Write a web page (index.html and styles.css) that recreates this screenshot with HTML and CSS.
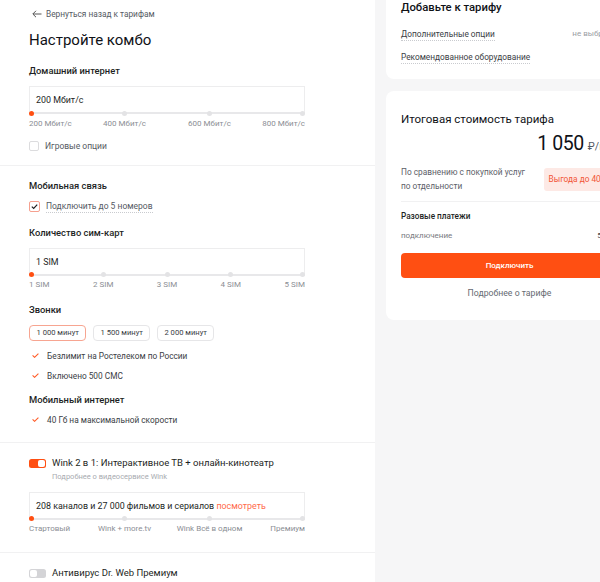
FILE: index.html
```html
<!DOCTYPE html>
<html lang="ru">
<head>
<meta charset="utf-8">
<link rel="stylesheet" href="styles.css">
</head>
<body>
<div class="page">
  <main class="left">
    <section class="sec sec-top">
      <a class="back"><svg class="back-ico" viewBox="0 0 10 8" width="10" height="8"><path d="M9.5 4H1M4 0.8L0.8 4 4 7.2" fill="none" stroke="#555" stroke-width="1"/></svg>Вернуться назад к тарифам</a>
      <h1 class="title">Настройте комбо</h1>
      <h2 class="sub-title">Домашний интернет</h2>
      <div class="slider">
        <div class="slider-box">200 Мбит/с</div>
        <div class="marks">
          <div class="mark first active"><span class="dot"></span><span class="mlabel">200 Мбит/с</span></div>
          <div class="mark"><span class="dot"></span><span class="mlabel">400 Мбит/с</span></div>
          <div class="mark"><span class="dot"></span><span class="mlabel">600 Мбит/с</span></div>
          <div class="mark last"><span class="dot"></span><span class="mlabel">800 Мбит/с</span></div>
        </div>
      </div>
      <label class="check-row game"><span class="box"></span><span class="check-text">Игровые опции</span></label>
    </section>

    <section class="sec sec-mobile">
      <h2 class="sub-title">Мобильная связь</h2>
      <label class="check-row numbers"><span class="box checked"><svg viewBox="0 0 10 10" width="9" height="9"><path d="M2 5.2L4.1 7.2 8 3" fill="none" stroke="#1d1d1f" stroke-width="1.3"/></svg></span><span class="check-text dotted">Подключить до 5 номеров</span></label>
      <h2 class="sub-title sims-title">Количество сим-карт</h2>
      <div class="slider">
        <div class="slider-box">1 SIM</div>
        <div class="marks">
          <div class="mark first active"><span class="dot"></span><span class="mlabel">1 SIM</span></div>
          <div class="mark"><span class="dot"></span><span class="mlabel">2 SIM</span></div>
          <div class="mark"><span class="dot"></span><span class="mlabel">3 SIM</span></div>
          <div class="mark"><span class="dot"></span><span class="mlabel">4 SIM</span></div>
          <div class="mark last"><span class="dot"></span><span class="mlabel">5 SIM</span></div>
        </div>
      </div>
      <h2 class="sub-title calls-title">Звонки</h2>
      <div class="pills">
        <span class="pill active">1 000 минут</span>
        <span class="pill">1 500 минут</span>
        <span class="pill">2 000 минут</span>
      </div>
      <ul class="feats first-feats">
        <li><svg class="tick" viewBox="0 0 7 5" width="7" height="5"><path d="M0.6 2.3L2.6 4.3 6.4 0.6" fill="none" stroke="#ff5a26" stroke-width="1.1"/></svg>Безлимит на Ростелеком по России</li>
        <li><svg class="tick" viewBox="0 0 7 5" width="7" height="5"><path d="M0.6 2.3L2.6 4.3 6.4 0.6" fill="none" stroke="#ff5a26" stroke-width="1.1"/></svg>Включено 500 СМС</li>
      </ul>
      <h2 class="sub-title net-title">Мобильный интернет</h2>
      <ul class="feats">
        <li><svg class="tick" viewBox="0 0 7 5" width="7" height="5"><path d="M0.6 2.3L2.6 4.3 6.4 0.6" fill="none" stroke="#ff5a26" stroke-width="1.1"/></svg>40 Гб на максимальной скорости</li>
      </ul>
    </section>

    <section class="sec sec-tv">
      <div class="toggle-row"><span class="toggle on"><span class="knob"></span></span><span class="toggle-text">Wink 2 в 1: Интерактивное ТВ + онлайн-кинотеатр</span></div>
      <div class="toggle-sub">Подробнее о видеосервисе Wink</div>
      <div class="slider tv-slider">
        <div class="slider-box">208 каналов и 27 000 фильмов и сериалов <span class="link">посмотреть</span></div>
        <div class="marks">
          <div class="mark first active"><span class="dot"></span><span class="mlabel">Стартовый</span></div>
          <div class="mark"><span class="dot"></span><span class="mlabel">Wink + more.tv</span></div>
          <div class="mark"><span class="dot"></span><span class="mlabel">Wink Всё в одном</span></div>
          <div class="mark last"><span class="dot"></span><span class="mlabel">Премиум</span></div>
        </div>
      </div>
    </section>

    <section class="sec sec-av">
      <div class="toggle-row"><span class="toggle"><span class="knob"></span></span><span class="toggle-text">Антивирус Dr. Web Премиум</span></div>
    </section>
  </main>

  <aside class="right">
    <div class="card card-add">
      <h3 class="card-title">Добавьте к тарифу</h3>
      <div class="add-row first-add"><span class="dotted">Дополнительные опции</span><span class="add-val">не выбраны</span></div>
      <div class="add-row"><span class="dotted">Рекомендованное оборудование</span></div>
    </div>
    <div class="card card-total">
      <h3 class="card-title total-title">Итоговая стоимость тарифа</h3>
      <div class="price"><span class="price-num">1 050</span><span class="price-unit">₽/мес</span></div>
      <div class="compare">
        <p class="compare-text">По сравнению с покупкой услуг<br>по отдельности</p>
        <span class="badge">Выгода до 400 ₽</span>
      </div>
      <div class="once-title">Разовые платежи</div>
      <div class="once-row"><span>подключение</span><span class="once-val">500 ₽</span></div>
      <button class="btn">Подключить</button>
      <a class="more">Подробнее о тарифе</a>
    </div>
  </aside>
</div>
</body>
</html>
```

FILE: styles.css
```css
* { box-sizing: border-box; margin: 0; padding: 0; }
html, body { width: 600px; height: 582px; overflow: hidden; }
body {
  background: #f6f6f7;
  font-family: Roboto, "Noto Sans", sans-serif;
  color: #1d1f24;
}
.page { display: flex; align-items: flex-start; width: 700px; }

.left { width: 375px; background: #fff; flex: none; }
.sec { padding: 0 70px 0 29px; border-bottom: 1px solid #f1f1f2; }
.sec-top { padding-top: 7px; padding-bottom: 12px; }
.back { display: flex; align-items: center; gap: 4px; font-size: 8.3px; line-height: 14px; color: #555a63; margin-left: 3px; }
.back-ico { flex: none; }
.title { font-size: 15px; line-height: 22px; font-weight: 400; margin-top: 8px; color: #101217; }
.sub-title { font-size: 9.4px; line-height: 14px; font-weight: 500; margin-top: 13px; color: #1d1f24; }

.slider { margin-top: 8px; }
.slider-box {
  border: 1px solid #ededee; border-bottom: 2px solid #e8e8ea;
  padding: 6px 6px 5px; font-size: 8.9px; line-height: 14px; color: #1d1f24;
}
.marks { display: flex; justify-content: space-between; padding: 0 10.5px; margin-top: -3.5px; }
.mark { width: 0; display: flex; flex-direction: column; align-items: center; }
.mark.first { align-items: flex-start; }
.mark.first > * { margin-left: -10.5px; }
.mark.last { align-items: flex-end; }
.mark.last > * { margin-right: -10.5px; }
.dot { width: 5px; height: 5px; border-radius: 50%; background: #e3e3e5; flex: none; }
.mark.active .dot { background: #ff4f12; }
.mlabel { white-space: nowrap; font-size: 8px; line-height: 10px; margin-top: 3px; color: #8b8e94; }

.check-row { display: flex; align-items: center; gap: 6px; height: 14px; font-size: 8.5px; line-height: 14px; color: #555a63; }
.check-row.game { margin-top: 10px; }
.box { width: 10px; height: 10px; border: 1px solid #dcdcde; border-radius: 2px; display: flex; align-items: center; justify-content: center; flex: none; }
.box.checked { border-color: #f6a08f; width: 11px; height: 11px; }
.dotted { border-bottom: 1px dotted #c9cbcf; line-height: 12px; }

.sec-mobile { padding-top: 13px; padding-bottom: 15px; }
.sec-mobile > .sub-title:first-child { margin-top: 0; }
.check-row.numbers { margin-top: 7px; }
.sims-title { margin-top: 12px; }
.calls-title { margin-top: 12.5px; }
.pills { display: flex; gap: 6.5px; margin-top: 8px; }
.pill { height: 16px; display: flex; align-items: center; padding: 0 6.5px; border: 1px solid #e6e6e8; border-radius: 4px; font-size: 7.6px; color: #3a3d44; }
.pill.active { border-color: #f7a591; }
.feats { list-style: none; }
.feats li { display: flex; align-items: center; font-size: 8.3px; line-height: 14px; color: #3a3d44; margin-top: 6px; }
.feats.first-feats li:first-child { margin-top: 8px; }
.tick { margin: 0 8px 0 3px; flex: none; }
.net-title { margin-top: 10px; }

.sec-tv { padding-top: 13.5px; padding-bottom: 18px; }
.toggle-row { display: flex; align-items: center; gap: 6px; font-size: 9.5px; line-height: 14px; }
.toggle { width: 17px; height: 9px; border-radius: 2.5px; background: #d4d4d7; display: flex; align-items: center; padding: 1px; flex: none; }
.toggle.on { background: #ff4f12; justify-content: flex-end; }
.knob { width: 7px; height: 7px; border-radius: 2px; background: #fff; }
.toggle-text { color: #1d1f24; }
.toggle-sub { font-size: 7.5px; line-height: 10px; color: #a8abb0; margin-top: 1.5px; padding-left: 23px; }
.tv-slider { margin-top: 10px; }
.link { color: #ff6a4a; }
.sec-av { padding-top: 13px; padding-bottom: 20px; border-bottom: none; }

.right { flex: none; padding-left: 11px; width: 300px; }
.card { background: #fff; width: 247px; padding: 0 15px; border-radius: 8px; }
.card-add { border-radius: 0 0 8px 8px; padding-bottom: 15px; }
.card-title { font-size: 11.3px; line-height: 16px; font-weight: 500; color: #101217; }
.add-row { display: flex; justify-content: space-between; align-items: center; font-size: 8.3px; line-height: 14px; color: #3a3d44; margin-top: 10px; }
.add-row.first-add { margin-top: 11px; }
.add-val { color: #9a9da3; font-size: 8px; }

.card-total { margin-top: 12px; padding-top: 20px; padding-bottom: 20px; }
.total-title { font-weight: 400; font-size: 11.5px; }
.price { display: flex; justify-content: flex-end; align-items: baseline; gap: 4px; margin-top: 4px; height: 26px; line-height: 26px; }
.price-num { font-size: 19.5px; letter-spacing: -0.4px; color: #101217; }
.price-unit { font-size: 10.5px; color: #555a63; }
.compare { display: flex; justify-content: space-between; align-items: center; margin-top: 8px; padding-bottom: 8px; border-bottom: 1px solid #f1f1f2; }
.compare-text { font-size: 8.3px; line-height: 14px; color: #5c6068; }
.badge { background: #fde9e5; color: #f25536; font-size: 8.3px; padding: 0 5px; height: 23px; display: flex; align-items: center; border-radius: 3px; white-space: nowrap; }
.once-title { font-size: 8.2px; line-height: 14px; font-weight: 500; margin-top: 6.5px; color: #1d1f24; }
.once-row { display: flex; justify-content: space-between; font-size: 8px; line-height: 14px; color: #777a80; margin-top: 6.5px; }
.once-val { color: #3a3d44; }
.btn { display: block; width: 100%; height: 25px; margin-top: 9.5px; border: none; border-radius: 4px; background: #ff4f12; color: #fff; font-family: inherit; font-size: 8px; font-weight: 500; }
.more { display: block; text-align: center; font-size: 8.7px; line-height: 14px; color: #666a72; margin-top: 8px; }
```
